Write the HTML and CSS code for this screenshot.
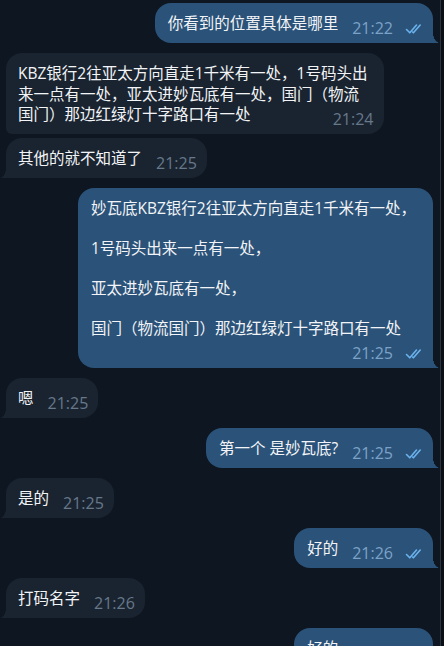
FILE: index.html
```html
<!DOCTYPE html>
<html>
  <head>
    <meta charset="utf-8">
    <title>Chat</title>
    <link rel="stylesheet" href="styles.css">
  </head>
  <body>
    <div class="screen">
      <div class="chat">
        <div class="row out">
          <div class="bubble tail">你看到的位置具体是哪里<span class="meta">21:22<svg class="check" viewBox="0 0 18 12"><path d="M1.5 6.5 L4.8 9.8 L11.5 2"/><path d="M7.6 9 L8.4 9.8 L15.2 2"/></svg></span></div>
        </div>

        <div class="row in">
          <div class="bubble wide">KBZ银行2往亚太方向直走1千米有一处，1号码头出来一点有一处，亚太进妙瓦底有一处，国门（物流国门）那边红绿灯十字路口有一处<span class="meta">21:24</span></div>
        </div>
        <div class="row in grouped">
          <div class="bubble tail">其他的就不知道了<span class="meta">21:25</span></div>
        </div>

        <div class="row out">
          <div class="bubble tail long">妙瓦底KBZ银行2往亚太方向直走1千米有一处，<br><br>1号码头出来一点有一处，<br><br>亚太进妙瓦底有一处，<br><br>国门（物流国门）那边红绿灯十字路口有一处<span class="meta">21:25<svg class="check" viewBox="0 0 18 12"><path d="M1.5 6.5 L4.8 9.8 L11.5 2"/><path d="M7.6 9 L8.4 9.8 L15.2 2"/></svg></span></div>
        </div>

        <div class="row in">
          <div class="bubble tail">嗯<span class="meta">21:25</span></div>
        </div>

        <div class="row out">
          <div class="bubble tail">第一个 是妙瓦底?<span class="meta">21:25<svg class="check" viewBox="0 0 18 12"><path d="M1.5 6.5 L4.8 9.8 L11.5 2"/><path d="M7.6 9 L8.4 9.8 L15.2 2"/></svg></span></div>
        </div>

        <div class="row in">
          <div class="bubble tail">是的<span class="meta">21:25</span></div>
        </div>

        <div class="row out">
          <div class="bubble tail">好的<span class="meta">21:26<svg class="check" viewBox="0 0 18 12"><path d="M1.5 6.5 L4.8 9.8 L11.5 2"/><path d="M7.6 9 L8.4 9.8 L15.2 2"/></svg></span></div>
        </div>

        <div class="row in">
          <div class="bubble tail">打码名字<span class="meta">21:26</span></div>
        </div>

        <div class="row out">
          <div class="bubble tail">好的<span class="meta">21:26<svg class="check" viewBox="0 0 18 12"><path d="M1.5 6.5 L4.8 9.8 L11.5 2"/><path d="M7.6 9 L8.4 9.8 L15.2 2"/></svg></span></div>
        </div>
      </div>
      <div class="edge"></div>
    </div>
  </body>
</html>
```

FILE: styles.css
```css
body {
  margin: 0;
  width: 444px;
  height: 646px;
  overflow: hidden;
  background: #0e1621;
  font-family: "Open Sans", "Noto Sans CJK SC", sans-serif;
  color: #f2f4f7;
}

.screen {
  display: flex;
  height: 646px;
}

.chat {
  flex: 1;
  display: flex;
  flex-direction: column;
  gap: 10px;
  padding: 3px 7px 0 6px;
  overflow: hidden;
}

/* thin scrollbar strip on the right */
.edge {
  width: 3px;
  background: #0a0f16;
  border-left: 1px solid #2a333e;
}

.row {
  display: flex;
}

.row.out {
  justify-content: flex-end;
}

.row.in {
  justify-content: flex-start;
}

.row.grouped {
  margin-top: -6px;
}

.bubble {
  position: relative;
  box-sizing: border-box;
  display: flow-root;
  max-width: 355px;
  padding: 10px 10px 4px 13px;
  font-size: 15.5px;
  line-height: 20.5px;
  border-radius: 16px;
}

.bubble.long {
  line-height: 20px;
}

.out .bubble {
  background: #2b5278;
}

.in .bubble {
  background: #1a2430;
  padding-left: 12px;
}

.in .bubble.wide {
  max-width: 377.5px;
  border-bottom-left-radius: 6px;
}

/* tails */
.out .bubble.tail {
  border-bottom-right-radius: 0;
}

.out .bubble.tail::after {
  content: "";
  position: absolute;
  right: -7px;
  bottom: 0;
  width: 7px;
  height: 10px;
  background: radial-gradient(ellipse 7px 10px at 100% 0, transparent 97%, #2b5278 100%);
}

.in .bubble.tail {
  border-bottom-left-radius: 0;
}

.in .bubble.tail::after {
  content: "";
  position: absolute;
  left: -6px;
  bottom: 0;
  width: 6px;
  height: 10px;
  background: radial-gradient(ellipse 6px 10px at 0 0, transparent 97%, #1a2430 100%);
}

.meta {
  float: right;
  display: flex;
  align-items: center;
  gap: 12px;
  margin: 5px 0 0 14px;
  height: 21px;
  font-family: "Open Sans", sans-serif;
  font-size: 16px;
  line-height: 21px;
}

.out .meta {
  color: #7ca2c9;
}

.in .meta {
  color: #66788a;
}

.check {
  width: 18px;
  height: 12px;
  fill: none;
  stroke: #6ab3ee;
  stroke-width: 1.6;
  stroke-linecap: round;
  stroke-linejoin: round;
}
```
